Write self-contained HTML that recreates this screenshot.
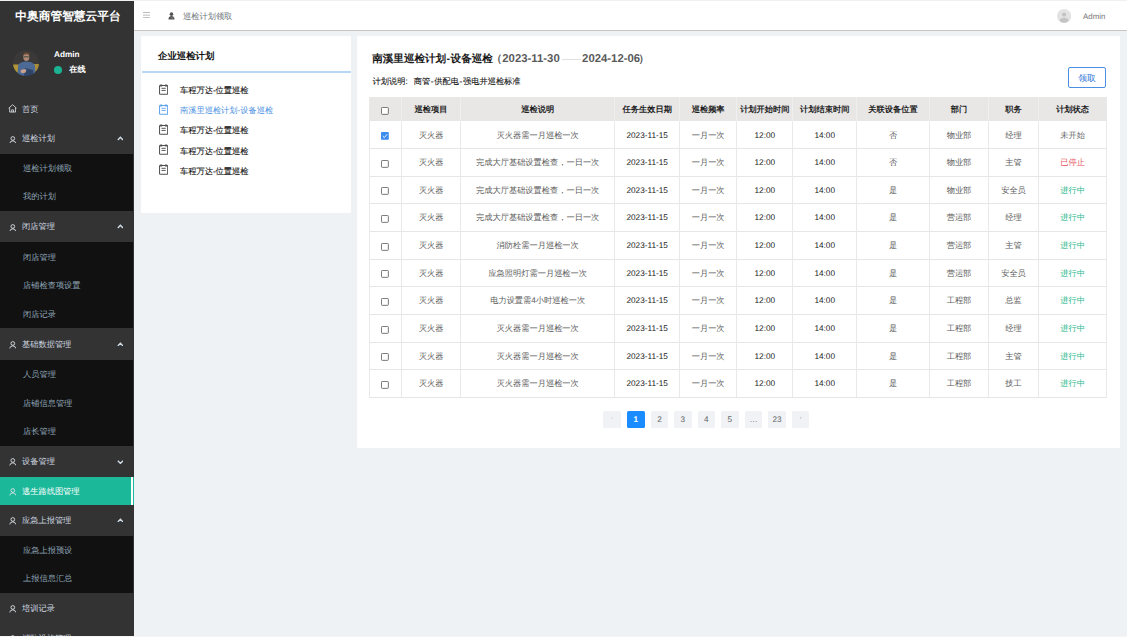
<!DOCTYPE html><html><head><meta charset="utf-8"><style>
*{margin:0;padding:0;box-sizing:border-box}
html,body{width:1127px;height:637px;overflow:hidden;background:#eff2f5;font-family:"Liberation Sans",sans-serif;position:relative;text-rendering:geometricPrecision}
.abs{position:absolute}
#topline{left:0;top:0;width:1127px;height:1px;background:#f0f0f0}
#side{left:0;top:1px;width:134px;height:634.6px;background:#333;overflow:hidden}
#botline{left:0;top:635.6px;width:1127px;height:1.4px;background:#f6f6f6}
.brand{left:1px;top:8.5px;width:134px;text-align:center;color:#fff;font-weight:bold;font-size:11.74px;line-height:15px;white-space:nowrap;}
.avatar{left:12.8px;top:49.5px;width:26.6px;height:26.6px;border-radius:50%;overflow:hidden;background:#3a3a3a}
.uname{left:54px;top:48.5px;color:#fff;font-weight:bold;font-size:8.22px;line-height:11px}
.dot{left:54px;top:65.8px;width:8.2px;height:8.2px;border-radius:50%;background:#1ab394}
.online{left:69.3px;top:64.4px;color:#fff;font-weight:bold;font-size:8.22px;line-height:11px}
.mi{left:0;width:134px;overflow:hidden}
.mi .t{position:absolute;left:22px;top:0;white-space:nowrap;font-size:8.22px;color:#cfd8e0;}
.sub{background:#111;width:133px}
.sub .t{left:23px;color:#8fa5b7}
.mi svg{position:absolute}
.active{background:#1bb899}
.active .t{color:#fff}
.active .bar{position:absolute;right:1px;top:0;width:1.6px;height:100%;background:#fff}
#hdr{left:134px;top:1px;width:993px;height:30.1px;background:#fff;border-bottom:1.4px solid #c6c6c6}
.crumb{left:183px;top:11.2px;font-size:8.22px;line-height:12px;color:#6e747a;white-space:nowrap}
.hadmin{left:1083px;top:11px;font-size:7.9px;line-height:12px;color:#777}
.card{background:#fff}
#lc{left:141px;top:35.6px;width:210px;height:177.4px;border-radius:1.5px}
#rc{left:356.5px;top:35.6px;width:763px;height:412.3px;border-radius:1.5px}
.lctitle{left:158px;top:48.5px;font-size:9.39px;font-weight:bold;color:#111;line-height:14px;white-space:nowrap}
.bline{left:142px;top:71.4px;width:209px;height:1.2px;background:#b8d8f5}
.li{left:180px;font-size:8.22px;color:#111;line-height:12px;white-space:nowrap;font-weight:normal;-webkit-text-stroke:0.12px #111}
.li.on{color:#4a90e2;-webkit-text-stroke:0}
.title{top:52.1px;font-size:10.57px;font-weight:bold;color:#1a1a1a;line-height:15px;white-space:nowrap}
.title.d{color:#595959}
.desc{top:75.8px;font-size:8.22px;color:#111;-webkit-text-stroke:0.1px #111;line-height:12px;white-space:nowrap}
.btn{left:1068px;top:67.4px;width:38px;height:20.4px;border:1.2px solid #4a90e2;border-radius:2px;color:#2f74d8;font-size:8.8px;line-height:20px;text-align:center}
.hl{height:1px;background:#e6e6e6}.vl{width:1px;background:#e9e9e9}.vlh{width:1px;background:#efefef}
.cell{text-align:center;font-size:8.22px;white-space:nowrap;overflow:hidden}
.th{color:#1e1e1e;font-weight:bold;}
.td{color:#5a5a5a;}
.td.n{color:#222;letter-spacing:0}
.cb{display:inline-block;width:8.4px;height:8.4px;border:1px solid #606060;border-radius:1px;background:#fff;vertical-align:middle;position:relative}
.cb.on{background:#409eff;border-color:#409eff}
.st0{color:#666}.st1{color:#e8505b}.st2{color:#2bb98c}
.pg{top:410.7px;width:17.6px;height:17.6px;background:#f0f2f5;color:#606266;font-size:8.2px;line-height:17.6px;text-align:center;border-radius:1.5px}
.pg.on{background:#1a8cff;color:#fff;font-weight:bold}
</style></head><body>
<div class="abs" id="topline"></div>
<div class="abs" id="side"></div>
<div class="abs brand">中奥商管智慧云平台</div>
<div class="abs avatar"><svg width="26.6" height="26.6" viewBox="0 0 26.6 26.6">
<defs><filter id="bl" x="-20%" y="-20%" width="140%" height="140%"><feGaussianBlur stdDeviation="0.45"/></filter></defs>
<rect width="26.6" height="26.6" fill="#333"/>
<g filter="url(#bl)">
<rect x="0" y="0" width="26.6" height="15" fill="#3a3938"/>
<rect x="0" y="14.5" width="6" height="8" fill="#b39538"/>
<rect x="20.5" y="14" width="6.1" height="7.5" fill="#a88d3a"/>
<path d="M4.5 26.6 L5 16 Q6 12.5 10 12 L13.2 11.5 L17 12 Q21 12.8 22 16 L22.5 26.6Z" fill="#4d6a96"/>
<path d="M12 18 L20 20 L21 26.6 L11 26.6Z" fill="#2e4468"/>
<path d="M7.5 20.5 Q10 18.5 13.5 19.5 L12.5 22.5 Q9.5 23.5 8 22.5Z" fill="#caa18f"/>
<ellipse cx="13.3" cy="7" rx="3" ry="4" fill="#b08877"/>
<path d="M10 4.2 Q13 0.5 16.5 3.5 L16.3 5 Q13 3.2 10.2 5.2Z" fill="#6b4a33"/>
<rect x="10.8" y="6.2" width="5" height="1.2" fill="#554"/>
</g></svg></div>
<div class="abs uname">Admin</div>
<div class="abs dot"></div>
<div class="abs online">在线</div>
<div class="abs mi" style="top:94.65px;height:28.3px">
<div class="t" style="top:8.95px;line-height:12px">首页</div>
<svg style="left:7.8px;top:9.75px" width="9.2" height="8.6" viewBox="0 0 18 17"><path d="M1.2 8.4 L9 1.4 L16.8 8.4 M3.2 7 V15.9 H14.8 V7 M7.2 15.9 V11.6 H10.8 V15.9" fill="none" stroke="#e0e4e8" stroke-width="1.6" stroke-linejoin="round"/></svg>
</div>
<div class="abs mi" style="top:122.95px;height:31.45px">
<div class="t" style="top:10.52px;line-height:12px">巡检计划</div>
<svg style="left:8.7px;top:12.72px" width="7.6" height="7.6" viewBox="0 0 16 16"><circle cx="8" cy="5.2" r="3.9" fill="none" stroke="#dfe4e8" stroke-width="1.9"/><path d="M1.6 15.6 Q2.6 10.2 8 10.2 Q13.4 10.2 14.4 15.6" fill="none" stroke="#dfe4e8" stroke-width="1.9"/></svg>
<svg style="left:116.5px;top:13.12px" width="6.8" height="4.6" viewBox="0 0 15 10"><path d="M1.8 8.6 L7.5 2.6 L13.2 8.6" fill="none" stroke="#d3dee6" stroke-width="3"/></svg>
</div>
<div class="abs mi sub" style="top:154.4px;height:28.2px">
<div class="t" style="top:8.90px;line-height:12px">巡检计划领取</div>
</div>
<div class="abs mi sub" style="top:182.6px;height:28.2px">
<div class="t" style="top:8.90px;line-height:12px">我的计划</div>
</div>
<div class="abs mi" style="top:210.8px;height:31.6px">
<div class="t" style="top:10.60px;line-height:12px">闭店管理</div>
<svg style="left:8.7px;top:12.80px" width="7.6" height="7.6" viewBox="0 0 16 16"><circle cx="8" cy="5.2" r="3.9" fill="none" stroke="#dfe4e8" stroke-width="1.9"/><path d="M1.6 15.6 Q2.6 10.2 8 10.2 Q13.4 10.2 14.4 15.6" fill="none" stroke="#dfe4e8" stroke-width="1.9"/></svg>
<svg style="left:116.5px;top:13.20px" width="6.8" height="4.6" viewBox="0 0 15 10"><path d="M1.8 8.6 L7.5 2.6 L13.2 8.6" fill="none" stroke="#d3dee6" stroke-width="3"/></svg>
</div>
<div class="abs mi sub" style="top:242.4px;height:28.63px">
<div class="t" style="top:9.11px;line-height:12px">闭店管理</div>
</div>
<div class="abs mi sub" style="top:271.03px;height:28.63px">
<div class="t" style="top:9.11px;line-height:12px">店铺检查项设置</div>
</div>
<div class="abs mi sub" style="top:299.67px;height:28.63px">
<div class="t" style="top:9.11px;line-height:12px">闭店记录</div>
</div>
<div class="abs mi" style="top:328.3px;height:31.7px">
<div class="t" style="top:10.65px;line-height:12px">基础数据管理</div>
<svg style="left:8.7px;top:12.85px" width="7.6" height="7.6" viewBox="0 0 16 16"><circle cx="8" cy="5.2" r="3.9" fill="none" stroke="#dfe4e8" stroke-width="1.9"/><path d="M1.6 15.6 Q2.6 10.2 8 10.2 Q13.4 10.2 14.4 15.6" fill="none" stroke="#dfe4e8" stroke-width="1.9"/></svg>
<svg style="left:116.5px;top:13.25px" width="6.8" height="4.6" viewBox="0 0 15 10"><path d="M1.8 8.6 L7.5 2.6 L13.2 8.6" fill="none" stroke="#d3dee6" stroke-width="3"/></svg>
</div>
<div class="abs mi sub" style="top:360px;height:28.6px">
<div class="t" style="top:9.10px;line-height:12px">人员管理</div>
</div>
<div class="abs mi sub" style="top:388.6px;height:28.6px">
<div class="t" style="top:9.10px;line-height:12px">店铺信息管理</div>
</div>
<div class="abs mi sub" style="top:417.2px;height:28.6px">
<div class="t" style="top:9.10px;line-height:12px">店长管理</div>
</div>
<div class="abs mi" style="top:445.8px;height:31.3px">
<div class="t" style="top:10.45px;line-height:12px">设备管理</div>
<svg style="left:8.7px;top:12.65px" width="7.6" height="7.6" viewBox="0 0 16 16"><circle cx="8" cy="5.2" r="3.9" fill="none" stroke="#dfe4e8" stroke-width="1.9"/><path d="M1.6 15.6 Q2.6 10.2 8 10.2 Q13.4 10.2 14.4 15.6" fill="none" stroke="#dfe4e8" stroke-width="1.9"/></svg>
<svg style="left:116.5px;top:13.75px" width="6.8" height="4.6" viewBox="0 0 15 10"><path d="M1.8 1.4 L7.5 7.4 L13.2 1.4" fill="none" stroke="#d3dee6" stroke-width="3"/></svg>
</div>
<div class="abs mi active" style="top:477.1px;height:27.8px">
<div class="t" style="top:8.70px;line-height:12px">逃生路线图管理</div>
<svg style="left:8.7px;top:10.90px" width="7.6" height="7.6" viewBox="0 0 16 16"><circle cx="8" cy="5.2" r="3.9" fill="none" stroke="#dfe4e8" stroke-width="1.9"/><path d="M1.6 15.6 Q2.6 10.2 8 10.2 Q13.4 10.2 14.4 15.6" fill="none" stroke="#dfe4e8" stroke-width="1.9"/></svg>
<div class="bar"></div>
</div>
<div class="abs mi" style="top:504.9px;height:31.2px">
<div class="t" style="top:10.40px;line-height:12px">应急上报管理</div>
<svg style="left:8.7px;top:12.60px" width="7.6" height="7.6" viewBox="0 0 16 16"><circle cx="8" cy="5.2" r="3.9" fill="none" stroke="#dfe4e8" stroke-width="1.9"/><path d="M1.6 15.6 Q2.6 10.2 8 10.2 Q13.4 10.2 14.4 15.6" fill="none" stroke="#dfe4e8" stroke-width="1.9"/></svg>
<svg style="left:116.5px;top:13.00px" width="6.8" height="4.6" viewBox="0 0 15 10"><path d="M1.8 8.6 L7.5 2.6 L13.2 8.6" fill="none" stroke="#d3dee6" stroke-width="3"/></svg>
</div>
<div class="abs mi sub" style="top:536.1px;height:28.25px">
<div class="t" style="top:8.93px;line-height:12px">应急上报预设</div>
</div>
<div class="abs mi sub" style="top:564.35px;height:28.25px">
<div class="t" style="top:8.93px;line-height:12px">上报信息汇总</div>
</div>
<div class="abs mi" style="top:592.6px;height:31.45px">
<div class="t" style="top:10.52px;line-height:12px">培训记录</div>
<svg style="left:8.7px;top:12.72px" width="7.6" height="7.6" viewBox="0 0 16 16"><circle cx="8" cy="5.2" r="3.9" fill="none" stroke="#dfe4e8" stroke-width="1.9"/><path d="M1.6 15.6 Q2.6 10.2 8 10.2 Q13.4 10.2 14.4 15.6" fill="none" stroke="#dfe4e8" stroke-width="1.9"/></svg>
</div>
<div class="abs mi" style="top:622.4px;height:31.45px">
<div class="t" style="top:10.52px;line-height:12px">消防设施管理</div>
<svg style="left:8.7px;top:12.72px" width="7.6" height="7.6" viewBox="0 0 16 16"><circle cx="8" cy="5.2" r="3.9" fill="none" stroke="#dfe4e8" stroke-width="1.9"/><path d="M1.6 15.6 Q2.6 10.2 8 10.2 Q13.4 10.2 14.4 15.6" fill="none" stroke="#dfe4e8" stroke-width="1.9"/></svg>
</div>
<div class="abs" id="hdr"></div>
<svg class="abs" style="left:143px;top:12px" width="7" height="6.2" viewBox="0 0 14 12"><rect y="0" width="14" height="1.6" fill="#aaa"/><rect y="5.2" width="14" height="1.6" fill="#aaa"/><rect y="10.4" width="14" height="1.6" fill="#aaa"/></svg>
<svg class="abs" style="left:168px;top:11.9px" width="7" height="7.8" viewBox="0 0 14 16"><circle cx="7" cy="4.4" r="3.7" fill="#555"/><path d="M0.8 15.6 Q0.6 8.6 7 8.4 Q13.4 8.6 13.2 15.6Z" fill="#555"/><path d="M7.6 11.6 L8.8 12.6 L10 11.4" stroke="#fff" stroke-width="1" fill="none"/></svg>
<div class="abs crumb">巡检计划领取</div>
<svg class="abs" style="left:1057px;top:8.6px" width="14.2" height="14.2" viewBox="0 0 28 28"><circle cx="14" cy="14" r="14" fill="#e3e3e3"/><circle cx="14" cy="11" r="4.2" fill="#c4c4c4"/><path d="M5 23 Q6 17.5 14 17.5 Q22 17.5 23 23 Q19 27 14 27 Q9 27 5 23Z" fill="#c4c4c4"/></svg>
<div class="abs hadmin">Admin</div>
<div class="abs card" id="lc"></div>
<div class="abs lctitle">企业巡检计划</div>
<div class="abs bline"></div>
<svg class="abs" style="left:159.2px;top:84px" width="9.2" height="10.9" viewBox="0 0 20 22.7" preserveAspectRatio="none"><rect x="1.2" y="3.2" width="17.6" height="18.3" rx="1.6" fill="none" stroke="#505050" stroke-width="2.2"/><rect x="1.6" y="1" width="6" height="4.2" rx="2" fill="#505050"/><rect x="12.4" y="1" width="6" height="4.2" rx="2" fill="#505050"/><rect x="5.4" y="7.9" width="9.2" height="2.3" fill="#6a6a6a"/><rect x="5.4" y="12.3" width="9.2" height="2.3" fill="#6a6a6a"/></svg>
<div class="abs li" style="top:85.20px">车程万达-位置巡检</div>
<svg class="abs" style="left:159.2px;top:104px" width="9.2" height="10.9" viewBox="0 0 20 22.7" preserveAspectRatio="none"><rect x="1.2" y="3.2" width="17.6" height="18.3" rx="1.6" fill="none" stroke="#5ea2ee" stroke-width="2.2"/><rect x="1.6" y="1" width="6" height="4.2" rx="2" fill="#5ea2ee"/><rect x="12.4" y="1" width="6" height="4.2" rx="2" fill="#5ea2ee"/><rect x="5.4" y="7.9" width="9.2" height="2.3" fill="#7ab4f0"/><rect x="5.4" y="12.3" width="9.2" height="2.3" fill="#7ab4f0"/></svg>
<div class="abs li on" style="top:105.10px">南溪里巡检计划-设备巡检</div>
<svg class="abs" style="left:159.2px;top:124px" width="9.2" height="10.9" viewBox="0 0 20 22.7" preserveAspectRatio="none"><rect x="1.2" y="3.2" width="17.6" height="18.3" rx="1.6" fill="none" stroke="#505050" stroke-width="2.2"/><rect x="1.6" y="1" width="6" height="4.2" rx="2" fill="#505050"/><rect x="12.4" y="1" width="6" height="4.2" rx="2" fill="#505050"/><rect x="5.4" y="7.9" width="9.2" height="2.3" fill="#6a6a6a"/><rect x="5.4" y="12.3" width="9.2" height="2.3" fill="#6a6a6a"/></svg>
<div class="abs li" style="top:125.30px">车程万达-位置巡检</div>
<svg class="abs" style="left:159.2px;top:144px" width="9.2" height="10.9" viewBox="0 0 20 22.7" preserveAspectRatio="none"><rect x="1.2" y="3.2" width="17.6" height="18.3" rx="1.6" fill="none" stroke="#505050" stroke-width="2.2"/><rect x="1.6" y="1" width="6" height="4.2" rx="2" fill="#505050"/><rect x="12.4" y="1" width="6" height="4.2" rx="2" fill="#505050"/><rect x="5.4" y="7.9" width="9.2" height="2.3" fill="#6a6a6a"/><rect x="5.4" y="12.3" width="9.2" height="2.3" fill="#6a6a6a"/></svg>
<div class="abs li" style="top:145.60px">车程万达-位置巡检</div>
<svg class="abs" style="left:159.2px;top:164px" width="9.2" height="10.9" viewBox="0 0 20 22.7" preserveAspectRatio="none"><rect x="1.2" y="3.2" width="17.6" height="18.3" rx="1.6" fill="none" stroke="#505050" stroke-width="2.2"/><rect x="1.6" y="1" width="6" height="4.2" rx="2" fill="#505050"/><rect x="12.4" y="1" width="6" height="4.2" rx="2" fill="#505050"/><rect x="5.4" y="7.9" width="9.2" height="2.3" fill="#6a6a6a"/><rect x="5.4" y="12.3" width="9.2" height="2.3" fill="#6a6a6a"/></svg>
<div class="abs li" style="top:165.60px">车程万达-位置巡检</div>
<div class="abs card" id="rc"></div>
<div class="abs title" style="left:372.2px;">南溪里巡检计划</div>
<div class="abs title" style="left:446.6px">-</div>
<div class="abs title" style="left:450.6px">设备巡检</div>
<div class="abs title d" style="left:491.6px">（</div>
<div class="abs title d" style="left:502.3px;font-size:11.35px">2023-11-30</div>
<div class="abs" style="left:562px;top:58.6px;width:18.7px;height:1px;background:#e0e0e0"></div>
<div class="abs title d" style="left:582.1px;font-size:11.35px">2024-12-06</div>
<div class="abs title d" style="left:638.4px">）</div>
<div class="abs desc" style="left:372.6px">计划说明</div>
<div class="abs desc" style="left:405.5px">:</div>
<div class="abs desc" style="left:413.7px">商管<span style="display:inline-block;width:4.11px;text-align:center">-</span>供配电<span style="display:inline-block;width:4.11px;text-align:center">-</span>强电井巡检标准</div>
<div class="abs btn">领取</div>
<div class="abs" style="left:369.4px;top:97.0px;width:737.4px;height:23.900000000000006px;background:#e8e7e6"></div>
<div class="abs hl" style="left:369.4px;top:120.40px;width:737.4px"></div>
<div class="abs hl" style="left:369.4px;top:148.05px;width:737.4px"></div>
<div class="abs hl" style="left:369.4px;top:175.70px;width:737.4px"></div>
<div class="abs hl" style="left:369.4px;top:203.35px;width:737.4px"></div>
<div class="abs hl" style="left:369.4px;top:231.00px;width:737.4px"></div>
<div class="abs hl" style="left:369.4px;top:258.65px;width:737.4px"></div>
<div class="abs hl" style="left:369.4px;top:286.30px;width:737.4px"></div>
<div class="abs hl" style="left:369.4px;top:313.95px;width:737.4px"></div>
<div class="abs hl" style="left:369.4px;top:341.60px;width:737.4px"></div>
<div class="abs hl" style="left:369.4px;top:369.25px;width:737.4px"></div>
<div class="abs hl" style="left:369.4px;top:396.90px;width:737.4px"></div>
<div class="abs vl" style="left:368.90px;top:120.9px;height:276.5px"></div>
<div class="abs vl" style="left:401.10px;top:120.9px;height:276.5px"></div>
<div class="abs vlh" style="left:401.10px;top:97.0px;height:23.900000000000006px"></div>
<div class="abs vl" style="left:460.00px;top:120.9px;height:276.5px"></div>
<div class="abs vlh" style="left:460.00px;top:97.0px;height:23.900000000000006px"></div>
<div class="abs vl" style="left:614.40px;top:120.9px;height:276.5px"></div>
<div class="abs vlh" style="left:614.40px;top:97.0px;height:23.900000000000006px"></div>
<div class="abs vl" style="left:679.00px;top:120.9px;height:276.5px"></div>
<div class="abs vlh" style="left:679.00px;top:97.0px;height:23.900000000000006px"></div>
<div class="abs vl" style="left:736.30px;top:120.9px;height:276.5px"></div>
<div class="abs vlh" style="left:736.30px;top:97.0px;height:23.900000000000006px"></div>
<div class="abs vl" style="left:792.30px;top:120.9px;height:276.5px"></div>
<div class="abs vlh" style="left:792.30px;top:97.0px;height:23.900000000000006px"></div>
<div class="abs vl" style="left:856.10px;top:120.9px;height:276.5px"></div>
<div class="abs vlh" style="left:856.10px;top:97.0px;height:23.900000000000006px"></div>
<div class="abs vl" style="left:928.90px;top:120.9px;height:276.5px"></div>
<div class="abs vlh" style="left:928.90px;top:97.0px;height:23.900000000000006px"></div>
<div class="abs vl" style="left:988.10px;top:120.9px;height:276.5px"></div>
<div class="abs vlh" style="left:988.10px;top:97.0px;height:23.900000000000006px"></div>
<div class="abs vl" style="left:1037.90px;top:120.9px;height:276.5px"></div>
<div class="abs vlh" style="left:1037.90px;top:97.0px;height:23.900000000000006px"></div>
<div class="abs vl" style="left:1106.30px;top:120.9px;height:276.5px"></div>
<div class="abs vl" style="left:368.90px;top:97.0px;height:23.900000000000006px"></div>
<div class="abs vl" style="left:1106.30px;top:97.0px;height:23.900000000000006px"></div>
<div class="abs" style="left:381px;top:107px"><svg width="7.8" height="7.8" viewBox="0 0 14 14" style="display:block"><rect x="0.8" y="0.8" width="12.4" height="12.4" rx="1.5" fill="#fff" stroke="#5a5a5a" stroke-width="1.5"/></svg></div>
<div class="abs cell th" style="left:401.6px;width:58.89999999999998px;top:98.00px;height:23.90px;line-height:23.90px">巡检项目</div>
<div class="abs cell th" style="left:460.5px;width:154.39999999999998px;top:98.00px;height:23.90px;line-height:23.90px">巡检说明</div>
<div class="abs cell th" style="left:614.9px;width:64.60000000000002px;top:98.00px;height:23.90px;line-height:23.90px">任务生效日期</div>
<div class="abs cell th" style="left:679.5px;width:57.299999999999955px;top:98.00px;height:23.90px;line-height:23.90px">巡检频率</div>
<div class="abs cell th" style="left:736.8px;width:56.0px;top:98.00px;height:23.90px;line-height:23.90px">计划开始时间</div>
<div class="abs cell th" style="left:792.8px;width:63.80000000000007px;top:98.00px;height:23.90px;line-height:23.90px">计划结束时间</div>
<div class="abs cell th" style="left:856.6px;width:72.79999999999995px;top:98.00px;height:23.90px;line-height:23.90px">关联设备位置</div>
<div class="abs cell th" style="left:929.4px;width:59.200000000000045px;top:98.00px;height:23.90px;line-height:23.90px">部门</div>
<div class="abs cell th" style="left:988.6px;width:49.80000000000007px;top:98.00px;height:23.90px;line-height:23.90px">职务</div>
<div class="abs cell th" style="left:1038.4px;width:68.39999999999986px;top:98.00px;height:23.90px;line-height:23.90px">计划状态</div>
<div class="abs" style="left:381px;top:132px"><svg width="7.8" height="7.8" viewBox="0 0 14 14" style="display:block"><rect x="0" y="0" width="14" height="14" rx="1.5" fill="#3b8ef0"/><path d="M3 7.2 L6 10 L11.2 4" fill="none" stroke="#fff" stroke-width="1.6"/></svg></div>
<div class="abs cell td " style="left:401.6px;width:58.89999999999998px;top:121.50px;height:27.65px;line-height:27.65px">灭火器</div>
<div class="abs cell td " style="left:460.5px;width:154.39999999999998px;top:121.50px;height:27.65px;line-height:27.65px">灭火器需一月巡检一次</div>
<div class="abs cell td n" style="left:614.9px;width:64.60000000000002px;top:121.50px;height:27.65px;line-height:27.65px">2023-11-15</div>
<div class="abs cell td " style="left:679.5px;width:57.299999999999955px;top:121.50px;height:27.65px;line-height:27.65px">一月一次</div>
<div class="abs cell td n" style="left:736.8px;width:56.0px;top:121.50px;height:27.65px;line-height:27.65px">12:00</div>
<div class="abs cell td n" style="left:792.8px;width:63.80000000000007px;top:121.50px;height:27.65px;line-height:27.65px">14:00</div>
<div class="abs cell td " style="left:856.6px;width:72.79999999999995px;top:121.50px;height:27.65px;line-height:27.65px">否</div>
<div class="abs cell td " style="left:929.4px;width:59.200000000000045px;top:121.50px;height:27.65px;line-height:27.65px">物业部</div>
<div class="abs cell td " style="left:988.6px;width:49.80000000000007px;top:121.50px;height:27.65px;line-height:27.65px">经理</div>
<div class="abs cell td st0" style="left:1038.4px;width:68.39999999999986px;top:121.50px;height:27.65px;line-height:27.65px">未开始</div>
<div class="abs" style="left:381px;top:160px"><svg width="7.8" height="7.8" viewBox="0 0 14 14" style="display:block"><rect x="0.8" y="0.8" width="12.4" height="12.4" rx="1.5" fill="#fff" stroke="#5a5a5a" stroke-width="1.5"/></svg></div>
<div class="abs cell td " style="left:401.6px;width:58.89999999999998px;top:149.15px;height:27.65px;line-height:27.65px">灭火器</div>
<div class="abs cell td " style="left:460.5px;width:154.39999999999998px;top:149.15px;height:27.65px;line-height:27.65px">完成大厅基础设置检查，一日一次</div>
<div class="abs cell td n" style="left:614.9px;width:64.60000000000002px;top:149.15px;height:27.65px;line-height:27.65px">2023-11-15</div>
<div class="abs cell td " style="left:679.5px;width:57.299999999999955px;top:149.15px;height:27.65px;line-height:27.65px">一月一次</div>
<div class="abs cell td n" style="left:736.8px;width:56.0px;top:149.15px;height:27.65px;line-height:27.65px">12:00</div>
<div class="abs cell td n" style="left:792.8px;width:63.80000000000007px;top:149.15px;height:27.65px;line-height:27.65px">14:00</div>
<div class="abs cell td " style="left:856.6px;width:72.79999999999995px;top:149.15px;height:27.65px;line-height:27.65px">否</div>
<div class="abs cell td " style="left:929.4px;width:59.200000000000045px;top:149.15px;height:27.65px;line-height:27.65px">物业部</div>
<div class="abs cell td " style="left:988.6px;width:49.80000000000007px;top:149.15px;height:27.65px;line-height:27.65px">主管</div>
<div class="abs cell td st1" style="left:1038.4px;width:68.39999999999986px;top:149.15px;height:27.65px;line-height:27.65px">已停止</div>
<div class="abs" style="left:381px;top:187px"><svg width="7.8" height="7.8" viewBox="0 0 14 14" style="display:block"><rect x="0.8" y="0.8" width="12.4" height="12.4" rx="1.5" fill="#fff" stroke="#5a5a5a" stroke-width="1.5"/></svg></div>
<div class="abs cell td " style="left:401.6px;width:58.89999999999998px;top:176.80px;height:27.65px;line-height:27.65px">灭火器</div>
<div class="abs cell td " style="left:460.5px;width:154.39999999999998px;top:176.80px;height:27.65px;line-height:27.65px">完成大厅基础设置检查，一日一次</div>
<div class="abs cell td n" style="left:614.9px;width:64.60000000000002px;top:176.80px;height:27.65px;line-height:27.65px">2023-11-15</div>
<div class="abs cell td " style="left:679.5px;width:57.299999999999955px;top:176.80px;height:27.65px;line-height:27.65px">一月一次</div>
<div class="abs cell td n" style="left:736.8px;width:56.0px;top:176.80px;height:27.65px;line-height:27.65px">12:00</div>
<div class="abs cell td n" style="left:792.8px;width:63.80000000000007px;top:176.80px;height:27.65px;line-height:27.65px">14:00</div>
<div class="abs cell td " style="left:856.6px;width:72.79999999999995px;top:176.80px;height:27.65px;line-height:27.65px">是</div>
<div class="abs cell td " style="left:929.4px;width:59.200000000000045px;top:176.80px;height:27.65px;line-height:27.65px">物业部</div>
<div class="abs cell td " style="left:988.6px;width:49.80000000000007px;top:176.80px;height:27.65px;line-height:27.65px">安全员</div>
<div class="abs cell td st2" style="left:1038.4px;width:68.39999999999986px;top:176.80px;height:27.65px;line-height:27.65px">进行中</div>
<div class="abs" style="left:381px;top:215px"><svg width="7.8" height="7.8" viewBox="0 0 14 14" style="display:block"><rect x="0.8" y="0.8" width="12.4" height="12.4" rx="1.5" fill="#fff" stroke="#5a5a5a" stroke-width="1.5"/></svg></div>
<div class="abs cell td " style="left:401.6px;width:58.89999999999998px;top:204.45px;height:27.65px;line-height:27.65px">灭火器</div>
<div class="abs cell td " style="left:460.5px;width:154.39999999999998px;top:204.45px;height:27.65px;line-height:27.65px">完成大厅基础设置检查，一日一次</div>
<div class="abs cell td n" style="left:614.9px;width:64.60000000000002px;top:204.45px;height:27.65px;line-height:27.65px">2023-11-15</div>
<div class="abs cell td " style="left:679.5px;width:57.299999999999955px;top:204.45px;height:27.65px;line-height:27.65px">一月一次</div>
<div class="abs cell td n" style="left:736.8px;width:56.0px;top:204.45px;height:27.65px;line-height:27.65px">12:00</div>
<div class="abs cell td n" style="left:792.8px;width:63.80000000000007px;top:204.45px;height:27.65px;line-height:27.65px">14:00</div>
<div class="abs cell td " style="left:856.6px;width:72.79999999999995px;top:204.45px;height:27.65px;line-height:27.65px">是</div>
<div class="abs cell td " style="left:929.4px;width:59.200000000000045px;top:204.45px;height:27.65px;line-height:27.65px">营运部</div>
<div class="abs cell td " style="left:988.6px;width:49.80000000000007px;top:204.45px;height:27.65px;line-height:27.65px">经理</div>
<div class="abs cell td st2" style="left:1038.4px;width:68.39999999999986px;top:204.45px;height:27.65px;line-height:27.65px">进行中</div>
<div class="abs" style="left:381px;top:243px"><svg width="7.8" height="7.8" viewBox="0 0 14 14" style="display:block"><rect x="0.8" y="0.8" width="12.4" height="12.4" rx="1.5" fill="#fff" stroke="#5a5a5a" stroke-width="1.5"/></svg></div>
<div class="abs cell td " style="left:401.6px;width:58.89999999999998px;top:232.10px;height:27.65px;line-height:27.65px">灭火器</div>
<div class="abs cell td " style="left:460.5px;width:154.39999999999998px;top:232.10px;height:27.65px;line-height:27.65px">消防栓需一月巡检一次</div>
<div class="abs cell td n" style="left:614.9px;width:64.60000000000002px;top:232.10px;height:27.65px;line-height:27.65px">2023-11-15</div>
<div class="abs cell td " style="left:679.5px;width:57.299999999999955px;top:232.10px;height:27.65px;line-height:27.65px">一月一次</div>
<div class="abs cell td n" style="left:736.8px;width:56.0px;top:232.10px;height:27.65px;line-height:27.65px">12:00</div>
<div class="abs cell td n" style="left:792.8px;width:63.80000000000007px;top:232.10px;height:27.65px;line-height:27.65px">14:00</div>
<div class="abs cell td " style="left:856.6px;width:72.79999999999995px;top:232.10px;height:27.65px;line-height:27.65px">是</div>
<div class="abs cell td " style="left:929.4px;width:59.200000000000045px;top:232.10px;height:27.65px;line-height:27.65px">营运部</div>
<div class="abs cell td " style="left:988.6px;width:49.80000000000007px;top:232.10px;height:27.65px;line-height:27.65px">主管</div>
<div class="abs cell td st2" style="left:1038.4px;width:68.39999999999986px;top:232.10px;height:27.65px;line-height:27.65px">进行中</div>
<div class="abs" style="left:381px;top:270px"><svg width="7.8" height="7.8" viewBox="0 0 14 14" style="display:block"><rect x="0.8" y="0.8" width="12.4" height="12.4" rx="1.5" fill="#fff" stroke="#5a5a5a" stroke-width="1.5"/></svg></div>
<div class="abs cell td " style="left:401.6px;width:58.89999999999998px;top:259.75px;height:27.65px;line-height:27.65px">灭火器</div>
<div class="abs cell td " style="left:460.5px;width:154.39999999999998px;top:259.75px;height:27.65px;line-height:27.65px">应急照明灯需一月巡检一次</div>
<div class="abs cell td n" style="left:614.9px;width:64.60000000000002px;top:259.75px;height:27.65px;line-height:27.65px">2023-11-15</div>
<div class="abs cell td " style="left:679.5px;width:57.299999999999955px;top:259.75px;height:27.65px;line-height:27.65px">一月一次</div>
<div class="abs cell td n" style="left:736.8px;width:56.0px;top:259.75px;height:27.65px;line-height:27.65px">12:00</div>
<div class="abs cell td n" style="left:792.8px;width:63.80000000000007px;top:259.75px;height:27.65px;line-height:27.65px">14:00</div>
<div class="abs cell td " style="left:856.6px;width:72.79999999999995px;top:259.75px;height:27.65px;line-height:27.65px">是</div>
<div class="abs cell td " style="left:929.4px;width:59.200000000000045px;top:259.75px;height:27.65px;line-height:27.65px">营运部</div>
<div class="abs cell td " style="left:988.6px;width:49.80000000000007px;top:259.75px;height:27.65px;line-height:27.65px">安全员</div>
<div class="abs cell td st2" style="left:1038.4px;width:68.39999999999986px;top:259.75px;height:27.65px;line-height:27.65px">进行中</div>
<div class="abs" style="left:381px;top:298px"><svg width="7.8" height="7.8" viewBox="0 0 14 14" style="display:block"><rect x="0.8" y="0.8" width="12.4" height="12.4" rx="1.5" fill="#fff" stroke="#5a5a5a" stroke-width="1.5"/></svg></div>
<div class="abs cell td " style="left:401.6px;width:58.89999999999998px;top:287.40px;height:27.65px;line-height:27.65px">灭火器</div>
<div class="abs cell td " style="left:460.5px;width:154.39999999999998px;top:287.40px;height:27.65px;line-height:27.65px">电力设置需4小时巡检一次</div>
<div class="abs cell td n" style="left:614.9px;width:64.60000000000002px;top:287.40px;height:27.65px;line-height:27.65px">2023-11-15</div>
<div class="abs cell td " style="left:679.5px;width:57.299999999999955px;top:287.40px;height:27.65px;line-height:27.65px">一月一次</div>
<div class="abs cell td n" style="left:736.8px;width:56.0px;top:287.40px;height:27.65px;line-height:27.65px">12:00</div>
<div class="abs cell td n" style="left:792.8px;width:63.80000000000007px;top:287.40px;height:27.65px;line-height:27.65px">14:00</div>
<div class="abs cell td " style="left:856.6px;width:72.79999999999995px;top:287.40px;height:27.65px;line-height:27.65px">是</div>
<div class="abs cell td " style="left:929.4px;width:59.200000000000045px;top:287.40px;height:27.65px;line-height:27.65px">工程部</div>
<div class="abs cell td " style="left:988.6px;width:49.80000000000007px;top:287.40px;height:27.65px;line-height:27.65px">总监</div>
<div class="abs cell td st2" style="left:1038.4px;width:68.39999999999986px;top:287.40px;height:27.65px;line-height:27.65px">进行中</div>
<div class="abs" style="left:381px;top:326px"><svg width="7.8" height="7.8" viewBox="0 0 14 14" style="display:block"><rect x="0.8" y="0.8" width="12.4" height="12.4" rx="1.5" fill="#fff" stroke="#5a5a5a" stroke-width="1.5"/></svg></div>
<div class="abs cell td " style="left:401.6px;width:58.89999999999998px;top:315.05px;height:27.65px;line-height:27.65px">灭火器</div>
<div class="abs cell td " style="left:460.5px;width:154.39999999999998px;top:315.05px;height:27.65px;line-height:27.65px">灭火器需一月巡检一次</div>
<div class="abs cell td n" style="left:614.9px;width:64.60000000000002px;top:315.05px;height:27.65px;line-height:27.65px">2023-11-15</div>
<div class="abs cell td " style="left:679.5px;width:57.299999999999955px;top:315.05px;height:27.65px;line-height:27.65px">一月一次</div>
<div class="abs cell td n" style="left:736.8px;width:56.0px;top:315.05px;height:27.65px;line-height:27.65px">12:00</div>
<div class="abs cell td n" style="left:792.8px;width:63.80000000000007px;top:315.05px;height:27.65px;line-height:27.65px">14:00</div>
<div class="abs cell td " style="left:856.6px;width:72.79999999999995px;top:315.05px;height:27.65px;line-height:27.65px">是</div>
<div class="abs cell td " style="left:929.4px;width:59.200000000000045px;top:315.05px;height:27.65px;line-height:27.65px">工程部</div>
<div class="abs cell td " style="left:988.6px;width:49.80000000000007px;top:315.05px;height:27.65px;line-height:27.65px">经理</div>
<div class="abs cell td st2" style="left:1038.4px;width:68.39999999999986px;top:315.05px;height:27.65px;line-height:27.65px">进行中</div>
<div class="abs" style="left:381px;top:353px"><svg width="7.8" height="7.8" viewBox="0 0 14 14" style="display:block"><rect x="0.8" y="0.8" width="12.4" height="12.4" rx="1.5" fill="#fff" stroke="#5a5a5a" stroke-width="1.5"/></svg></div>
<div class="abs cell td " style="left:401.6px;width:58.89999999999998px;top:342.70px;height:27.65px;line-height:27.65px">灭火器</div>
<div class="abs cell td " style="left:460.5px;width:154.39999999999998px;top:342.70px;height:27.65px;line-height:27.65px">灭火器需一月巡检一次</div>
<div class="abs cell td n" style="left:614.9px;width:64.60000000000002px;top:342.70px;height:27.65px;line-height:27.65px">2023-11-15</div>
<div class="abs cell td " style="left:679.5px;width:57.299999999999955px;top:342.70px;height:27.65px;line-height:27.65px">一月一次</div>
<div class="abs cell td n" style="left:736.8px;width:56.0px;top:342.70px;height:27.65px;line-height:27.65px">12:00</div>
<div class="abs cell td n" style="left:792.8px;width:63.80000000000007px;top:342.70px;height:27.65px;line-height:27.65px">14:00</div>
<div class="abs cell td " style="left:856.6px;width:72.79999999999995px;top:342.70px;height:27.65px;line-height:27.65px">是</div>
<div class="abs cell td " style="left:929.4px;width:59.200000000000045px;top:342.70px;height:27.65px;line-height:27.65px">工程部</div>
<div class="abs cell td " style="left:988.6px;width:49.80000000000007px;top:342.70px;height:27.65px;line-height:27.65px">主管</div>
<div class="abs cell td st2" style="left:1038.4px;width:68.39999999999986px;top:342.70px;height:27.65px;line-height:27.65px">进行中</div>
<div class="abs" style="left:381px;top:381px"><svg width="7.8" height="7.8" viewBox="0 0 14 14" style="display:block"><rect x="0.8" y="0.8" width="12.4" height="12.4" rx="1.5" fill="#fff" stroke="#5a5a5a" stroke-width="1.5"/></svg></div>
<div class="abs cell td " style="left:401.6px;width:58.89999999999998px;top:370.35px;height:27.65px;line-height:27.65px">灭火器</div>
<div class="abs cell td " style="left:460.5px;width:154.39999999999998px;top:370.35px;height:27.65px;line-height:27.65px">灭火器需一月巡检一次</div>
<div class="abs cell td n" style="left:614.9px;width:64.60000000000002px;top:370.35px;height:27.65px;line-height:27.65px">2023-11-15</div>
<div class="abs cell td " style="left:679.5px;width:57.299999999999955px;top:370.35px;height:27.65px;line-height:27.65px">一月一次</div>
<div class="abs cell td n" style="left:736.8px;width:56.0px;top:370.35px;height:27.65px;line-height:27.65px">12:00</div>
<div class="abs cell td n" style="left:792.8px;width:63.80000000000007px;top:370.35px;height:27.65px;line-height:27.65px">14:00</div>
<div class="abs cell td " style="left:856.6px;width:72.79999999999995px;top:370.35px;height:27.65px;line-height:27.65px">是</div>
<div class="abs cell td " style="left:929.4px;width:59.200000000000045px;top:370.35px;height:27.65px;line-height:27.65px">工程部</div>
<div class="abs cell td " style="left:988.6px;width:49.80000000000007px;top:370.35px;height:27.65px;line-height:27.65px">技工</div>
<div class="abs cell td st2" style="left:1038.4px;width:68.39999999999986px;top:370.35px;height:27.65px;line-height:27.65px">进行中</div>
<div class="abs pg" style="left:603.4px"><span style="font-size:5px;color:#c8ccd2;position:relative;top:-3px">‹</span></div>
<div class="abs pg on" style="left:627px">1</div>
<div class="abs pg" style="left:650.7px">2</div>
<div class="abs pg" style="left:674.1px">3</div>
<div class="abs pg" style="left:697.5px">4</div>
<div class="abs pg" style="left:721px">5</div>
<div class="abs pg" style="left:744.8px">…</div>
<div class="abs pg" style="left:768.2px">23</div>
<div class="abs pg" style="left:791.9px"><span style="font-size:5px;color:#9aa0a8;position:relative;top:-3px">›</span></div>
<div class="abs" id="botline"></div>
</body></html>
